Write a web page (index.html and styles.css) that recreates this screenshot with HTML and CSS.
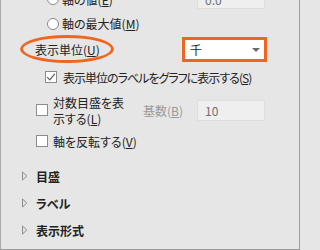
FILE: index.html
```html
<!DOCTYPE html>
<html lang="ja">
<head>
<meta charset="utf-8">
<link rel="stylesheet" href="styles.css">
</head>
<body>
<div class="panel">
  <div class="rows">
    <div class="row r0">
      <span class="radio"></span>
      <span class="lbl w-top">軸の値(<u>E</u>)</span>
      <span class="field">0.0</span>
    </div>
    <div class="row r1">
      <span class="radio"></span>
      <span class="lbl">軸の最大値(<u>M</u>)</span>
    </div>
    <div class="row r2">
      <span class="lbl w-unit">表示単位(<u>U</u>)</span>
      <div class="select">
        <span class="sel-val">千</span>
        <span class="arrow"></span>
      </div>
    </div>
    <div class="row r3">
      <span class="check"><svg width="12" height="12" viewBox="0 0 12 12"><polyline points="2.2,6.2 4.8,8.8 9.8,2.8" fill="none" stroke="#5a5a5a" stroke-width="1.2"/></svg></span>
      <span class="lbl tight">表示単位のラベルをグラフに表示する(<u>S</u>)</span>
    </div>
    <div class="row r4">
      <span class="check"></span>
      <span class="two"><span class="ln">対数目盛を表</span><span class="ln">示する(<u>L</u>)</span></span>
      <span class="lbl dim w-base">基数(<u>B</u>)</span>
      <span class="field">10</span>
    </div>
    <div class="row r5">
      <span class="check"></span>
      <span class="lbl">軸を反転する(<u>V</u>)</span>
    </div>
    <div class="row sec s1">
      <svg class="tri" width="6" height="10" viewBox="0 0 6 10"><polygon points="0.5,1 4.8,5 0.5,9" fill="none" stroke="#8c8c8c" stroke-width="1"/></svg>
      <span class="head">目盛</span>
    </div>
    <div class="row sec s2">
      <svg class="tri" width="6" height="10" viewBox="0 0 6 10"><polygon points="0.5,1 4.8,5 0.5,9" fill="none" stroke="#8c8c8c" stroke-width="1"/></svg>
      <span class="head">ラベル</span>
    </div>
    <div class="row sec s3">
      <svg class="tri" width="6" height="10" viewBox="0 0 6 10"><polygon points="0.5,1 4.8,5 0.5,9" fill="none" stroke="#8c8c8c" stroke-width="1"/></svg>
      <span class="head">表示形式</span>
    </div>
  </div>
  <div class="ring"></div>
</div>
</body>
</html>
```

FILE: styles.css
```css
html, body {
  margin: 0;
  padding: 0;
  background: #e6e6e6;
}

.panel {
  position: relative;
  width: 300px;
  height: 250px;
  box-sizing: border-box;
  background: #e6e6e6;
  border-left: 1px solid #a8a8a8;
  border-right: 1px solid #9c9c9c;
  border-bottom: 1px solid #9c9c9c;
  overflow: hidden;
  font-family: "Noto Sans CJK JP", "Noto Sans", sans-serif;
  font-size: 12px;
  color: #222222;
  font-feature-settings: "palt";
}

.rows {
  display: flex;
  flex-direction: column;
}

.row {
  display: flex;
  align-items: center;
}

.lbl {
  white-space: nowrap;
  line-height: 15px;
}

.tight {
  letter-spacing: -1px;
}

u {
  text-decoration: underline;
  text-underline-offset: 1px;
}

.r0 { margin-top: -12px; height: 22px; padding-left: 46px; }
.r1 { margin-top: 2px; height: 23px; padding-left: 46px; }
.r2 { margin-top: 2px; height: 25px; padding-left: 34px; }
.r3 { margin-top: 3px; height: 24px; padding-left: 44px; }
.r4 { margin-top: 5px; height: 32px; padding-left: 35px; }
.r5 { margin-top: 5px; height: 20px; padding-left: 35px; }
.s1 { margin-top: 15px; height: 20px; padding-left: 21px; }
.s2 { margin-top: 7px; height: 20px; padding-left: 21px; }
.s3 { margin-top: 7px; height: 20px; padding-left: 21px; }

.radio {
  width: 12px;
  height: 12px;
  box-sizing: border-box;
  border: 1px solid #8a8a8a;
  border-radius: 50%;
  background: #ffffff;
  margin-right: 3px;
  flex: none;
}

.check {
  width: 12px;
  height: 12px;
  box-sizing: border-box;
  border: 1px solid #8c8c8c;
  background: #ffffff;
  margin-right: 5px;
  flex: none;
  display: flex;
  align-items: center;
  justify-content: center;
}

.check svg {
  display: block;
  flex: none;
}

.r3 .check { margin-right: 6px; }

.w-top { width: 135px; }
.w-unit { width: 147px; }

.two {
  width: 90px;
  display: flex;
  flex-direction: column;
  gap: 1px;
}

.ln {
  display: block;
  white-space: nowrap;
  line-height: 15px;
}

.dim {
  color: #9a9a9a;
}

.w-base { width: 54px; }

.field {
  width: 68px;
  height: 21px;
  box-sizing: border-box;
  background: #efefef;
  border: 1px solid #dedede;
  color: #6e6e6e;
  padding-left: 7px;
  line-height: 19px;
  flex: none;
}

.r0 .field { height: 20px; }

.select {
  width: 85px;
  height: 25px;
  box-sizing: border-box;
  border: 3px solid #f0661f;
  background: #ffffff;
  display: flex;
  align-items: center;
  padding-left: 5px;
  padding-right: 4px;
  flex: none;
}

.sel-val {
  flex: 1;
  line-height: 14px;
  color: #222222;
}

.arrow {
  width: 0;
  height: 0;
  border-left: 4px solid transparent;
  border-right: 4px solid transparent;
  border-top: 4px solid #6a6a6a;
  margin-top: 1px;
}

.tri {
  display: block;
  flex: none;
  margin-right: 8px;
}

.head {
  font-weight: bold;
  line-height: 15px;
  color: #222222;
}

.ring {
  position: absolute;
  left: 19px;
  top: 35px;
  width: 94px;
  height: 28px;
  box-sizing: border-box;
  border: 3px solid #f0661f;
  border-radius: 50%;
}
```
